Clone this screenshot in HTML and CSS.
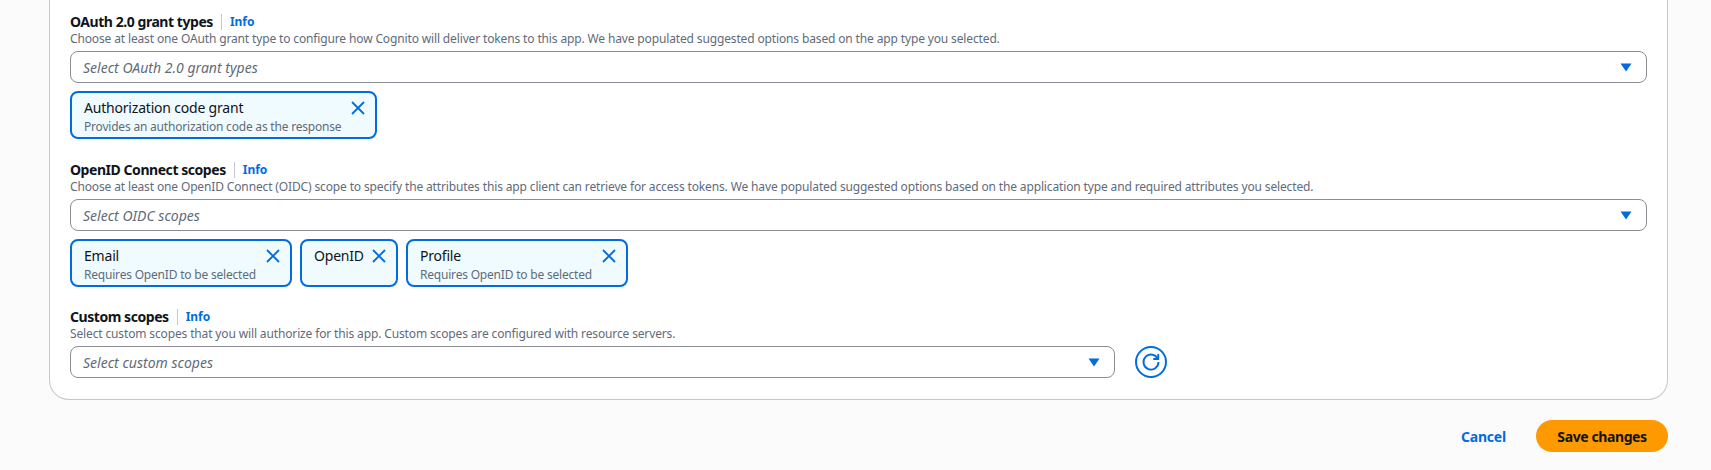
FILE: index.html
```html
<!DOCTYPE html>
<html lang="en">
<head>
<meta charset="utf-8">
<title>App client</title>
<link rel="stylesheet" href="styles.css">
</head>
<body>
<main class="page">
  <section class="card">
    <div class="field">
      <div class="label"><span class="label-text">OAuth 2.0 grant types</span><a class="info">Info</a></div>
      <p class="desc">Choose at least one OAuth grant type to configure how Cognito will deliver tokens to this app. We have populated suggested options based on the app type you selected.</p>
      <div class="select"><span>Select OAuth 2.0 grant types</span><svg class="caret" viewBox="0 0 12 9"><path d="M0.5 0.5h11L6 8.5z"/></svg></div>
      <div class="tokens">
        <div class="token t-auth">
          <div class="token-body"><div class="token-name">Authorization code grant</div><div class="token-sub">Provides an authorization code as the response</div></div>
          <svg class="x" viewBox="0 0 16 16"><path d="M2 2l12 12M14 2L2 14"/></svg>
        </div>
      </div>
    </div>
    <div class="field f2">
      <div class="label"><span class="label-text">OpenID Connect scopes</span><a class="info">Info</a></div>
      <p class="desc">Choose at least one OpenID Connect (OIDC) scope to specify the attributes this app client can retrieve for access tokens. We have populated suggested options based on the application type and required attributes you selected.</p>
      <div class="select"><span>Select OIDC scopes</span><svg class="caret" viewBox="0 0 12 9"><path d="M0.5 0.5h11L6 8.5z"/></svg></div>
      <div class="tokens">
        <div class="token t-scope">
          <div class="token-body"><div class="token-name">Email</div><div class="token-sub">Requires OpenID to be selected</div></div>
          <svg class="x" viewBox="0 0 16 16"><path d="M2 2l12 12M14 2L2 14"/></svg>
        </div>
        <div class="token t-open">
          <div class="token-body"><div class="token-name">OpenID</div></div>
          <svg class="x" viewBox="0 0 16 16"><path d="M2 2l12 12M14 2L2 14"/></svg>
        </div>
        <div class="token t-scope">
          <div class="token-body"><div class="token-name">Profile</div><div class="token-sub">Requires OpenID to be selected</div></div>
          <svg class="x" viewBox="0 0 16 16"><path d="M2 2l12 12M14 2L2 14"/></svg>
        </div>
      </div>
    </div>
    <div class="field f3">
      <div class="label"><span class="label-text">Custom scopes</span><a class="info">Info</a></div>
      <p class="desc">Select custom scopes that you will authorize for this app. Custom scopes are configured with resource servers.</p>
      <div class="select-row">
        <div class="select narrow"><span>Select custom scopes</span><svg class="caret" viewBox="0 0 12 9"><path d="M0.5 0.5h11L6 8.5z"/></svg></div>
        <button class="refresh" aria-label="Refresh"><svg viewBox="0 0 16 16"><path d="M13.4 5.4A6 6 0 1 0 14 8"/><path d="M13.8 1.6v4H9.8"/></svg></button>
      </div>
    </div>
  </section>
  <div class="actions">
    <a class="cancel">Cancel</a>
    <button class="save">Save changes</button>
  </div>
</main>
</body>
</html>
```

FILE: styles.css
```css
* { box-sizing: border-box; }
html, body { margin: 0; height: 100%; }
body {
  background: #fbfbfb;
  color: #0f141a;
  font-family: "Noto Sans", "Open Sans", sans-serif;
  overflow: hidden;
}
.page { padding: 0 43px 0 49px; }
.card {
  height: 400px;
  background: #fff;
  border: 1.5px solid #c6c6cd;
  border-top: 0;
  border-radius: 0 0 20px 20px;
  padding: 12px 20px 0 20px;
}
.field { display: block; }
.f2 { margin-top: 21px; }
.f3 { margin-top: 20px; }
.label { display: flex; align-items: center; height: 19px; }
.label-text { font-size: 14px; font-weight: 700; line-height: 19px; letter-spacing: -0.45px; }
.info {
  margin-left: 8px;
  padding-left: 8px;
  border-left: 1px solid #c6c6cd;
  color: #006ce0;
  font-size: 12px;
  font-weight: 700;
  line-height: 16px;
}
.desc {
  margin: 0;
  color: #5f6b7a;
  font-size: 12px;
  line-height: 16px;
  letter-spacing: -0.14px;
  white-space: nowrap;
}
.select {
  display: flex;
  align-items: center;
  justify-content: space-between;
  height: 32px;
  margin-top: 4px;
  padding: 0 14px 0 12px;
  background: #fff;
  border: 1.5px solid #8c8c94;
  border-radius: 8px;
  color: #5f6b7a;
  font-size: 14px;
  font-style: italic;
  letter-spacing: 0.02px;
}
.caret { width: 12px; height: 9px; fill: #006ce0; flex: none; }
.tokens { display: flex; gap: 8px; margin-top: 8px; }
.token {
  display: flex;
  justify-content: space-between;
  align-items: flex-start;
  height: 48px;
  padding: 5px 9px 0 12px;
  background: #f0fbff;
  border: 2px solid #006ce0;
  border-radius: 8px;
}
.t-auth { width: 307px; }
.t-scope { width: 222px; }
.t-open { width: 98px; }
.token-name { font-size: 14px; line-height: 19px; letter-spacing: -0.2px; }
.token-sub { color: #5f6b7a; font-size: 12px; line-height: 17px; letter-spacing: -0.2px; white-space: nowrap; margin-top: 1px; }
.x { width: 16px; height: 16px; margin-top: 2px; fill: none; stroke: #006ce0; stroke-width: 1.8; flex: none; }
.select-row { display: flex; align-items: center; gap: 20px; }
.narrow { width: 1045px; }
.refresh {
  width: 32px;
  height: 32px;
  margin-top: 4px;
  padding: 0;
  display: flex;
  align-items: center;
  justify-content: center;
  background: #fff;
  border: 2px solid #006ce0;
  border-radius: 50%;
}
.refresh svg { width: 20px; height: 20px; fill: none; stroke: #006ce0; stroke-width: 1.5; }
.actions {
  display: flex;
  justify-content: flex-end;
  align-items: center;
  gap: 30px;
  margin-top: 20px;
}
.cancel { color: #006ce0; font-size: 14px; font-weight: 700; letter-spacing: -0.2px; }
.save {
  width: 132px;
  height: 32px;
  padding: 0;
  background: #ff9900;
  border: 0;
  border-radius: 16px;
  color: #0f141a;
  font-family: inherit;
  font-size: 14px;
  font-weight: 700;
  letter-spacing: -0.4px;
}
```
